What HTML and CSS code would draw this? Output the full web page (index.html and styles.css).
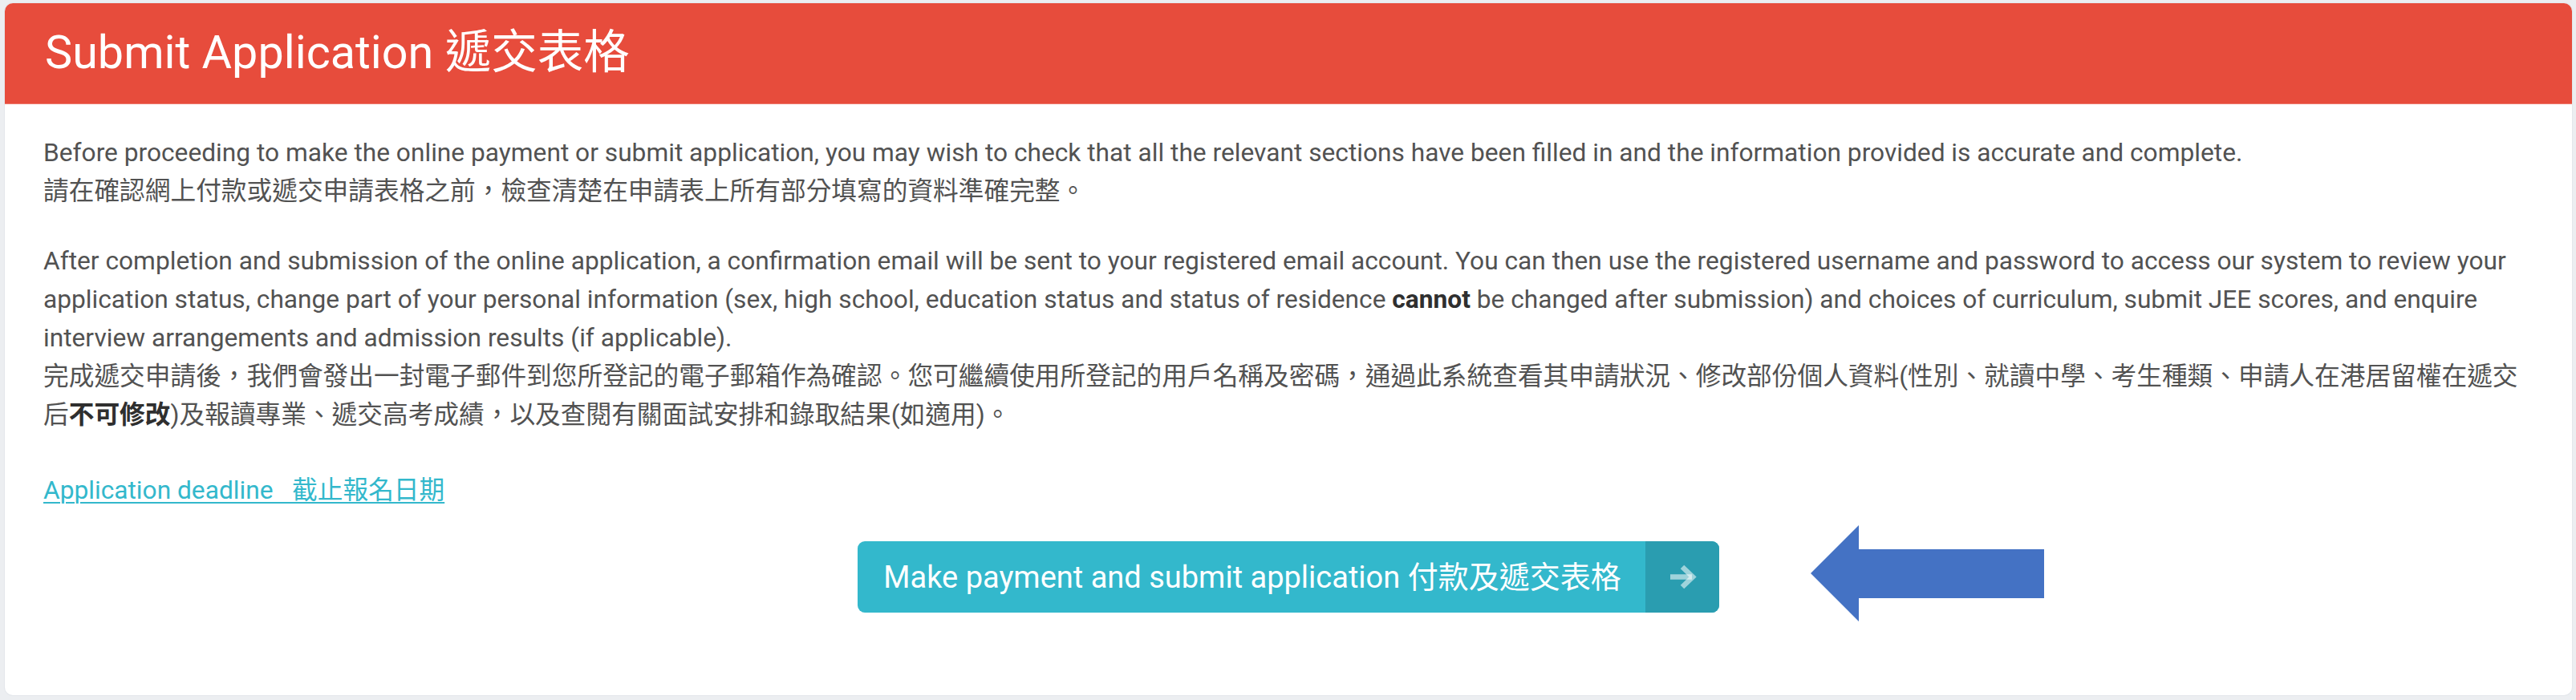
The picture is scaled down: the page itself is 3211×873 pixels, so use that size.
FILE: index.html
```html
<!DOCTYPE html>
<html lang="zh-Hant">
<head>
<meta charset="utf-8">
<title>Submit Application</title>
<link rel="stylesheet" href="styles.css">
</head>
<body>
<div class="card">
  <div class="card-header">
    <h2 class="card-title">Submit Application 遞交表格</h2>
  </div>
  <div class="card-body">
    <p class="para">Before proceeding to make the online payment or submit application, you may wish to check that all the relevant sections have been filled in and the information provided is accurate and complete.<br>請在確認網上付款或遞交申請表格之前，檢查清楚在申請表上所有部分填寫的資料準確完整。</p>
    <p class="para">After completion and submission of the online application, a confirmation email will be sent to your registered email account. You can then use the registered username and password to access our system to review your application status, change part of your personal information (sex, high school, education status and status of residence <b>cannot</b> be changed after submission) and choices of curriculum, submit JEE scores, and enquire interview arrangements and admission results (if applicable).<br>完成遞交申請後，我們會發出一封電子郵件到您所登記的電子郵箱作為確認。您可繼續使用所登記的用戶名稱及密碼，通過此系統查看其申請狀況、修改部份個人資料(性別、就讀中學、考生種類、申請人在港居留權在遞交后<b>不可修改</b>)及報讀專業、遞交高考成績，以及查閱有關面試安排和錄取結果(如適用)。</p>
    <p class="para para-link"><a class="deadline-link" href="#">Application deadline &nbsp;&nbsp;截止報名日期</a></p>
    <div class="actions">
      <a class="btn-submit" href="#">
        <span class="btn-label">Make payment and submit application 付款及遞交表格</span>
        <span class="btn-icon">
          <svg width="36" height="33" viewBox="0 0 36 33" aria-hidden="true">
            <path d="M3 16.5 H30" stroke="currentColor" stroke-width="6.5" fill="none"/>
            <path d="M18 4 L31 16.5 L18 29" stroke="currentColor" stroke-width="6.5" fill="none" stroke-linejoin="miter"/>
          </svg>
        </span>
      </a>
    </div>
    <svg class="pointer-arrow" width="291" height="120" viewBox="0 0 291 120" aria-hidden="true">
      <polygon points="0,60 60,0 60,30 291,30 291,91 60,91 60,120" fill="#4472c4"/>
    </svg>
  </div>
</div>
</body>
</html>
```
FILE: styles.css
```css
html, body {
  margin: 0;
  padding: 0;
}
body {
  background: #eceef1;
  padding: 4px 5px 6px 6px;
  font-family: Roboto, "Noto Sans CJK TC", sans-serif;
}
.card {
  position: relative;
  background: #ffffff;
  border-radius: 10px;
  overflow: hidden;
  box-shadow: 0 0 0 1px #e4e7eb;
}
.card-header {
  background: #e74c3c;
  height: 126px;
  box-sizing: border-box;
  padding: 30px 50px 0 50px;
  border-bottom: 1px solid #ee7a6e;
}
.card-title {
  margin: 0;
  font-family: Roboto, "Noto Sans CJK TC", sans-serif;
  font-weight: 400;
  font-size: 57.5px;
  line-height: 63px;
  color: #ffffff;
}
.card-body {
  padding: 37px 48px 103px 48px;
  color: #525252;
  font-size: 31.7px;
  line-height: 48px;
}
.para {
  margin: 0 0 39px 0;
}
.para b {
  font-weight: 700;
  color: #2f2f2f;
}
.para-link {
  margin-top: 46px;
}
.deadline-link {
  color: #33b8cc;
  text-decoration: underline;
  text-decoration-thickness: 2px;
  text-underline-offset: 4px;
}
.actions {
  display: flex;
  justify-content: center;
}
.btn-submit {
  display: flex;
  align-items: stretch;
  height: 89px;
  border-radius: 9px;
  overflow: hidden;
  background: #33b8cc;
  color: #ffffff;
  text-decoration: none;
}
.btn-label {
  display: flex;
  align-items: center;
  padding: 1px 30px 0 32px;
  font-size: 38px;
  line-height: 45px;
}
.btn-icon {
  display: flex;
  align-items: center;
  justify-content: center;
  width: 92px;
  background: #2a9db0;
  color: rgba(255, 255, 255, 0.55);
}
.pointer-arrow {
  position: absolute;
  left: 2251px;
  top: 651px;
}
```
